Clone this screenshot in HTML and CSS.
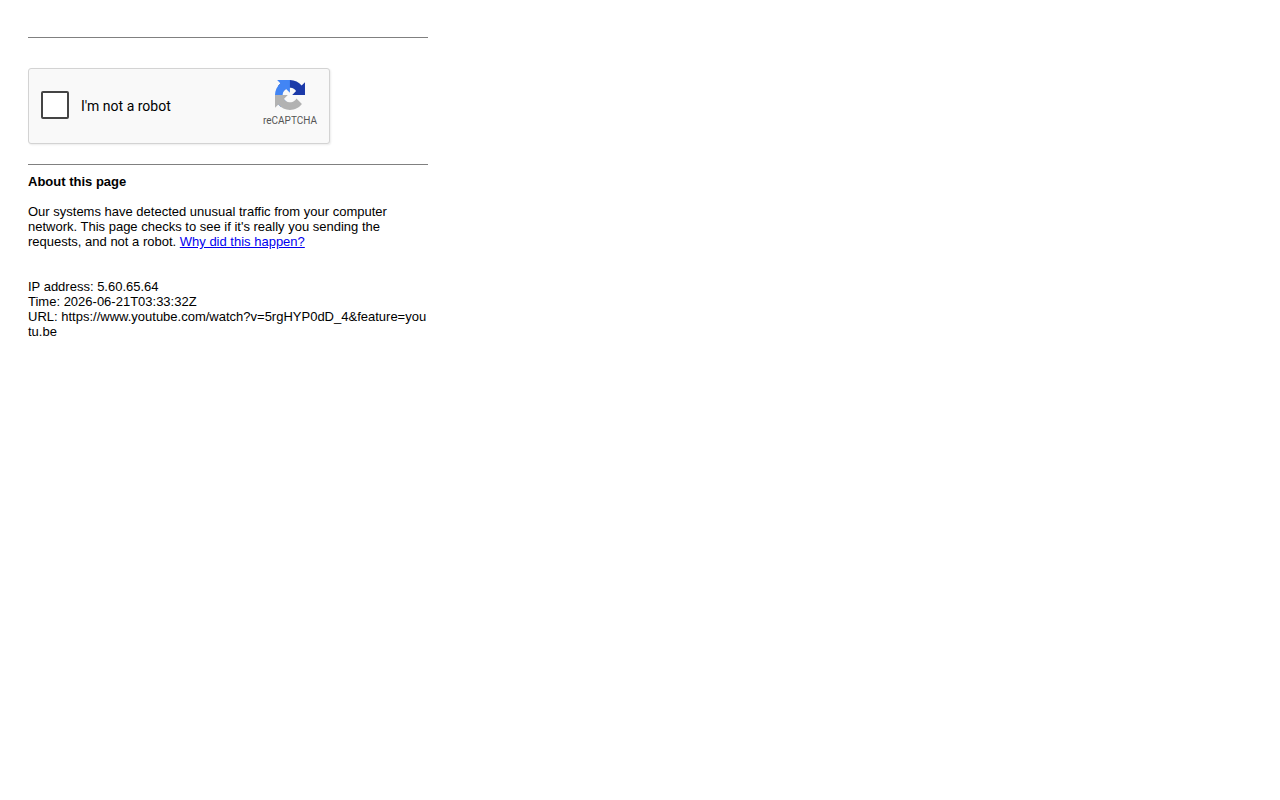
FILE: index.html
```html
<!DOCTYPE html>
<html lang="en">

<head>
    <meta charset="UTF-8">
    <meta name="viewport" content="width=device-width, initial-scale=1.0">
    <title>https://www.youtube.com/watch?v=5rgHYP0dD_4&amp;feature=youtu.be</title>
    <link rel="stylesheet" href="styles.css">
</head>

<body>
    <main class="container">
        <hr>
        <form class="captcha-form">
            <div class="captcha">
                <input type="checkbox" id="robot" name="robot">
                <label for="robot">I'm not a robot</label>
                <div class="brand">
                    <svg class="logo" viewBox="0 0 64 64" aria-hidden="true">
                        <path fill="#1c3aa9" d="M64 31.955l-.033-1.37V4.687l-7.16 7.16C50.948 4.674 42.033.093 32.05.093c-10.4 0-19.622 4.96-25.458 12.64l11.736 11.86a15.55 15.55 0 0 1 4.754-5.334c2.05-1.6 4.952-2.906 8.968-2.906.485 0 .86.057 1.135.163 4.976.393 9.288 3.14 11.828 7.124l-8.307 8.307L64 31.953"/>
                        <path fill="#4285f4" d="M31.862.094l-1.37.033H4.594l7.16 7.16C4.58 13.147 0 22.06 0 32.046c0 10.4 4.96 19.622 12.64 25.458L24.5 45.768a15.55 15.55 0 0 1-5.334-4.754c-1.6-2.05-2.906-4.952-2.906-8.968 0-.485.057-.86.163-1.135.393-4.976 3.14-9.288 7.124-11.828l8.307 8.307L31.86.095"/>
                        <path fill="#b2b2b2" d="M.001 32.045l.033 1.37v25.898l7.16-7.16c5.86 7.173 14.774 11.754 24.76 11.754 10.4 0 19.622-4.96 25.458-12.64l-11.736-11.86a15.55 15.55 0 0 1-4.754 5.334c-2.05 1.6-4.952 2.906-8.968 2.906-.485 0-.86-.057-1.135-.163-4.976-.393-9.288-3.14-11.828-7.124l8.307-8.307c-10.522.04-22.4.066-27.295-.005"/>
                    </svg>
                    <span>reCAPTCHA</span>
                </div>
            </div>
        </form>
        <hr>

        <div class="info">
            <b>About this page</b>
            <p>
                Our systems have detected unusual traffic from your computer network. This page checks to see if it's
                really you sending the requests, and not a robot. <a href="#">Why did this happen?</a>
            </p>
            <div class="details">
                IP address: 5.60.65.64<br>
                Time: 2026-06-21T03:33:32Z<br>
                URL: https://www.youtube.com/watch?v=5rgHYP0dD_4&amp;feature=youtu.be
            </div>
        </div>
    </main>
</body>

</html>
```
FILE: styles.css
```css
body {
    font-family: "Liberation Sans", Arial, sans-serif;
    font-size: 13px;
    line-height: 15px;
    background-color: #fff;
    color: #000;
    margin: 8px;
    padding: 20px;
}

.container {
    max-width: 400px;
    padding-top: 9px;
}

hr {
    height: 1px;
    margin: 0;
    border: none;
    background-color: #808080;
}

.captcha-form {
    margin: 30px 0 20px;
}

.captcha {
    display: flex;
    align-items: center;
    box-sizing: border-box;
    max-width: 302px;
    height: 76px;
    padding: 0 11px 0 12px;
    background: #f9f9f9;
    border: 1px solid #d3d3d3;
    border-radius: 3px;
    box-shadow: 1px 1px 2px rgba(0, 0, 0, 0.08);
    font-family: Roboto, sans-serif;
}

.captcha input {
    appearance: none;
    box-sizing: border-box;
    width: 28px;
    height: 28px;
    margin: 0 12px 2px 0;
    background: #fff;
    border: 2px solid #444;
    border-radius: 2px;
    cursor: pointer;
}

.captcha label {
    flex: 1;
    font-size: 14px;
    line-height: 17px;
}

.brand {
    display: flex;
    flex-direction: column;
    align-items: center;
    width: 56px;
    margin-bottom: 5px;
    color: #555;
    font-size: 10px;
    line-height: 12px;
}

.logo {
    width: 30px;
    height: 30px;
    margin-bottom: 5px;
}

.info {
    padding-top: 9px;
    overflow-wrap: break-word;
}

.info p {
    margin: 15px 0 30px;
}

.info a {
    color: #0000ee;
}

.details {
    word-break: break-all;
}
```
